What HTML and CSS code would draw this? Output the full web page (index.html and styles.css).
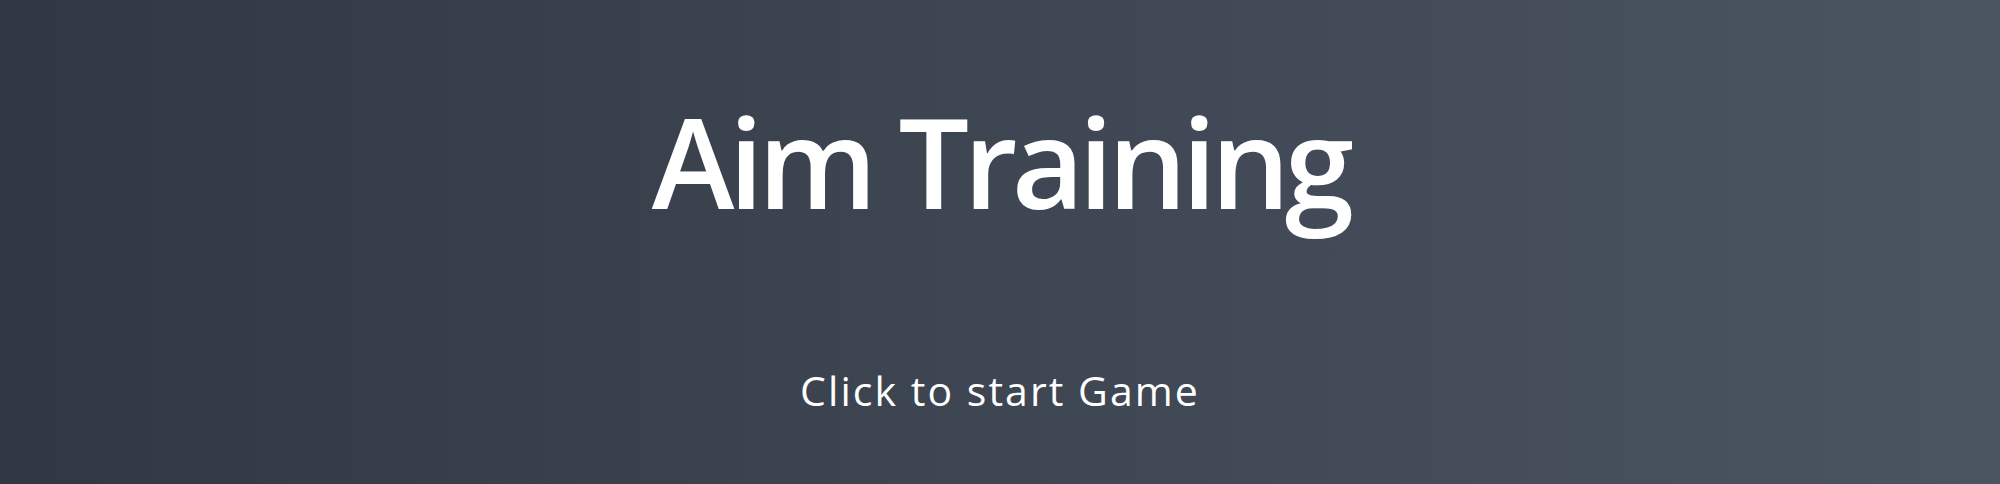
FILE: index.html
```html
<!DOCTYPE html>
<html lang="en">
<head>
<meta charset="utf-8">
<title>Aim Training</title>
<link rel="stylesheet" href="styles.css">
</head>
<body>
<main class="screen">
  <h1 class="title">Aim Training</h1>
  <p class="start">Click to start Game</p>
</main>
</body>
</html>
```

FILE: styles.css
```css
html, body {
  margin: 0;
  padding: 0;
  height: 100%;
}

body {
  background: linear-gradient(to right, #313844, #4b5461);
  font-family: "Open Sans", "Noto Sans", sans-serif;
  color: #ffffff;
  overflow: hidden;
}

.screen {
  height: 100%;
  box-sizing: border-box;
  padding-top: 86px;
  display: flex;
  flex-direction: column;
  align-items: center;
  gap: 130px;
}

.title {
  margin: 0;
  font-size: 125px;
  font-weight: 600;
  line-height: 150px;
  letter-spacing: -0.045em;
}

.start {
  margin: 0;
  font-size: 41px;
  font-weight: 400;
  line-height: 49px;
  letter-spacing: 0.05em;
  cursor: pointer;
}
```
